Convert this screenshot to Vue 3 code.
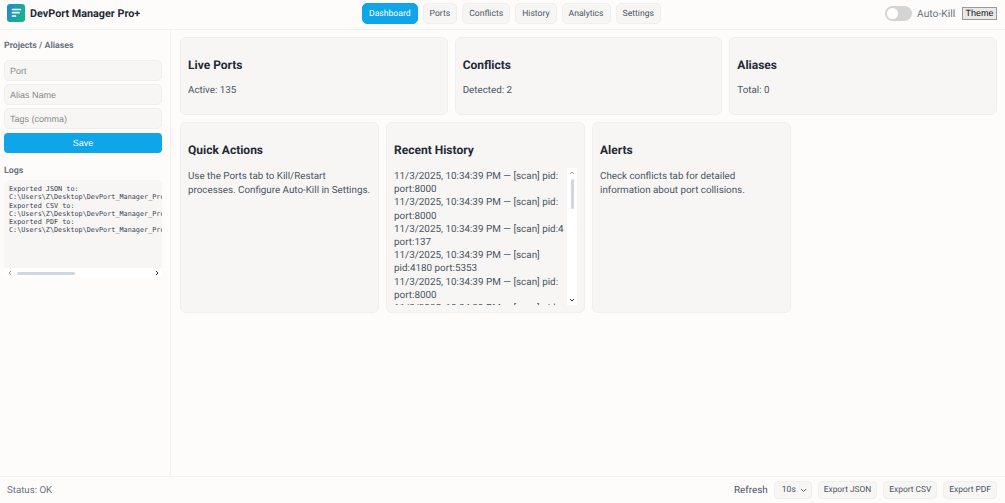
<template>
  <div class="app">
    <header class="topbar">
      <div class="brand">
        <svg class="logo" width="18" height="18" viewBox="0 0 18 18">
          <defs>
            <linearGradient id="lg" x1="0" y1="0" x2="1" y2="0.4">
              <stop offset="0" stop-color="#2388d8" />
              <stop offset="1" stop-color="#16b28a" />
            </linearGradient>
          </defs>
          <rect width="18" height="18" rx="3" fill="url(#lg)" />
          <path d="M5.5 5.5h8M5.5 8.7h6.5M5.5 12h3" stroke="#fff" stroke-width="1.7" stroke-linecap="round" fill="none" />
        </svg>
        <span class="brand-name">DevPort Manager Pro+</span>
      </div>
      <nav class="tabs">
        <button v-for="(t, i) in tabs" :key="t" class="tab" :class="{ active: i === 0 }">{{ t }}</button>
      </nav>
      <div class="top-right">
        <span class="switch"><span class="knob"></span></span>
        <span class="auto">Auto-Kill</span>
        <button class="theme">Theme</button>
      </div>
    </header>

    <div class="body">
      <aside class="side">
        <h4>Projects / Aliases</h4>
        <input class="field" placeholder="Port" />
        <input class="field" placeholder="Alias Name" />
        <input class="field" placeholder="Tags (comma)" />
        <button class="save">Save</button>
        <h4 class="logs-title">Logs</h4>
        <div class="logs-box">
          <pre class="logs">{{ logs }}</pre>
          <div class="hbar">
            <svg width="6" height="6" viewBox="0 0 6 6"><path d="M4 1L2 3l2 2" stroke="#999" fill="none" /></svg>
            <span class="hthumb"></span>
            <svg width="6" height="6" viewBox="0 0 6 6"><path d="M2 1l2 2-2 2" stroke="#333" fill="none" /></svg>
          </div>
        </div>
      </aside>

      <main class="main">
        <div class="row three">
          <section v-for="c in stats" :key="c.title" class="card">
            <h3>{{ c.title }}</h3>
            <p>{{ c.text }}</p>
          </section>
        </div>
        <div class="row four">
          <section class="card tall">
            <h3>Quick Actions</h3>
            <p>Use the Ports tab to Kill/Restart processes. Configure Auto-Kill in Settings.</p>
          </section>
          <section class="card tall">
            <h3>Recent History</h3>
            <div class="history-box">
              <div class="history">
                <div v-for="(h, i) in history" :key="i">11/3/2025, 10:34:39 PM — [scan] {{ h }}</div>
              </div>
              <div class="vbar">
                <svg width="6" height="6" viewBox="0 0 6 6"><path d="M1 4l2-2 2 2" stroke="#999" fill="none" /></svg>
                <span class="vtrack"><span class="vthumb"></span></span>
                <svg width="6" height="6" viewBox="0 0 6 6"><path d="M1 2l2 2 2-2" stroke="#333" fill="none" /></svg>
              </div>
            </div>
          </section>
          <section class="card tall">
            <h3>Alerts</h3>
            <p>Check conflicts tab for detailed information about port collisions.</p>
          </section>
        </div>
      </main>
    </div>

    <footer class="footer">
      <span class="status">Status: OK</span>
      <div class="foot-right">
        <span class="refresh">Refresh</span>
        <span class="select">10s
          <svg width="7" height="5" viewBox="0 0 7 5"><path d="M1 1l2.5 2.5L6 1" stroke="#666" fill="none" /></svg>
        </span>
        <button class="fbtn">Export JSON</button>
        <button class="fbtn">Export CSV</button>
        <button class="fbtn">Export PDF</button>
      </div>
    </footer>
  </div>
</template>

<script setup>
const tabs = ['Dashboard', 'Ports', 'Conflicts', 'History', 'Analytics', 'Settings']
const stats = [
  { title: 'Live Ports', text: 'Active: 135' },
  { title: 'Conflicts', text: 'Detected: 2' },
  { title: 'Aliases', text: 'Total: 0' },
]
const path = 'C:\\Users\\Z\\Desktop\\DevPort_Manager_Pro\\exports\\report'
const logs = `Exported JSON to:\n${path}.json\nExported CSV to:\n${path}.csv\nExported PDF to:\n${path}.pdf`
const history = [
  'pid: port:8000',
  'pid: port:8000',
  'pid:4 port:137',
  'pid:4180 port:5353',
  'pid: port:8000',
  'pid: port:8000',
]
</script>

<style>
html, body { margin: 0; background: #fdfcfa; }
</style>

<style scoped>
.app {
  width: 1005px;
  height: 503px;
  display: flex;
  flex-direction: column;
  font-family: Roboto, "Open Sans", sans-serif;
  text-rendering: geometricPrecision;
  color: #1f2937;
  background: #fdfcfa;
  overflow: hidden;
}
button, input { text-rendering: geometricPrecision; }
.topbar {
  height: 30px;
  flex: none;
  display: flex;
  align-items: center;
  padding: 0 8px 3px 7px;
  box-sizing: border-box;
  border-bottom: 1px solid #f3f2f0;
}
.brand { width: 355px; display: flex; align-items: center; gap: 5px; }
.logo { display: block; }
.brand-name { font-size: 10.8px; font-weight: 700; color: #1f2937; }
.tabs { display: flex; gap: 5px; }
.tab {
  height: 21px;
  padding: 1px 6px 0;
  font: 8.6px Roboto, sans-serif;
  color: #4b5563;
  background: #f7f6f4;
  border: 1px solid #f0efed;
  border-radius: 5px;
}
.tab.active {
  background: #0ea5e9;
  border-color: #0ea5e9;
  color: #fff;
}
.top-right { margin-left: auto; display: flex; align-items: center; }
.switch {
  width: 27px;
  height: 15px;
  border-radius: 8px;
  background: #d4d4d4;
  display: flex;
  align-items: center;
  padding-left: 2px;
  box-sizing: border-box;
}
.knob { width: 11px; height: 11px; border-radius: 50%; background: #fff; }
.auto { width: 45px; font-size: 10.3px; color: #6b7280; margin-left: 5px; }
.theme {
  width: 35px;
  height: 13px;
  padding: 0;
  font: 9px "Liberation Sans", sans-serif;
  color: #111;
  background: #e9e9e9;
  border: 1px solid #9a9a9a;
  border-radius: 0;
}
.body { flex: 1; display: flex; min-height: 0; }
.side {
  width: 171px;
  flex: none;
  box-sizing: border-box;
  padding: 10px 8px 0 4px;
  border-right: 1px solid #f3f2f0;
  display: flex;
  flex-direction: column;
}
.side h4 {
  margin: 0 0 8px;
  font-size: 8.8px;
  line-height: 12px;
  font-weight: 700;
  color: #6b7280;
}
.field {
  height: 21px;
  box-sizing: border-box;
  margin-bottom: 3px;
  padding: 0 5px;
  font: 9px "Liberation Sans", sans-serif;
  background: #f7f6f4;
  border: 1px solid #f0efed;
  border-radius: 5px;
  outline: none;
}
.field::placeholder { color: #8a8a8a; }
.save {
  height: 20px;
  margin-top: 1px;
  font: 9px "Liberation Sans", sans-serif;
  color: #fff;
  background: #0ea5e9;
  border: none;
  border-radius: 4px;
}
.side .logs-title { margin: 12px 0 3px; }
.logs-box {
  height: 98px;
  display: flex;
  flex-direction: column;
  background: #f7f6f4;
  border-radius: 5px;
  overflow: hidden;
}
.logs {
  flex: 1;
  margin: 0;
  padding: 5px 0 0 5px;
  overflow: hidden;
  font: 6.8px/8.3px "DejaVu Sans Mono", monospace;
  color: #374151;
}
.hbar {
  height: 10px;
  flex: none;
  display: flex;
  align-items: center;
  gap: 2px;
  padding: 0 2px 0 3px;
  background: #fff;
}
.hthumb { width: 58px; height: 3px; margin-right: auto; margin-left: 2px; background: #ccd7e2; border-radius: 2px; }
.main {
  flex: 1;
  min-width: 0;
  padding: 7px 8px 0 9px;
  display: flex;
  flex-direction: column;
  gap: 7px;
}
.row { display: grid; gap: 7px; }
.three { grid-template-columns: repeat(3, 1fr); }
.four { grid-template-columns: repeat(4, 1fr); }
.card {
  box-sizing: border-box;
  height: 78px;
  padding: 19px 7px 0;
  background: #f7f6f4;
  border: 1px solid #f0efed;
  border-radius: 6px;
  min-width: 0;
}
.card.tall { height: 191px; }
.card h3 {
  margin: 0 0 11px;
  font-size: 12px;
  line-height: 16px;
  font-weight: 700;
  color: #1f2937;
}
.card.tall h3 { margin-bottom: 12px; }
.card p {
  margin: 0;
  font-size: 9.8px;
  line-height: 13.5px;
  color: #4b5563;
}
.history-box {
  display: flex;
  height: 137px;
  margin-top: -2px;
}
.history {
  flex: 1;
  min-width: 0;
  padding-top: 2px;
  overflow: hidden;
  font-size: 9.9px;
  line-height: 13.2px;
  color: #4b5563;
}
.vbar {
  width: 10px;
  flex: none;
  display: flex;
  flex-direction: column;
  align-items: center;
  gap: 2px;
  padding: 2px 0;
  box-sizing: border-box;
  background: #fff;
}
.vtrack { flex: 1; }
.vthumb { display: block; width: 3px; height: 30px; margin-top: 1px; background: #ccd7e2; border-radius: 2px; }
.footer {
  height: 26px;
  flex: none;
  display: flex;
  align-items: center;
  justify-content: space-between;
  padding: 0 8px 0 7px;
  border-top: 1px solid #f3f2f0;
}
.status { font-size: 9.7px; color: #6b7280; }
.foot-right { display: flex; align-items: center; gap: 6px; }
.refresh { font-size: 9.9px; color: #4b5563; }
.select {
  width: 38px;
  height: 18px;
  box-sizing: border-box;
  display: flex;
  align-items: center;
  justify-content: space-between;
  padding: 0 4px 0 7px;
  font: 8.6px Roboto, sans-serif;
  color: #4b5563;
  background: #f7f6f4;
  border: 1px solid #f0efed;
  border-radius: 4px;
}
.fbtn {
  height: 18px;
  padding: 0 5px;
  font: 8.4px Roboto, sans-serif;
  color: #4b5563;
  background: #f7f6f4;
  border: 1px solid #f0efed;
  border-radius: 4px;
}
</style>
